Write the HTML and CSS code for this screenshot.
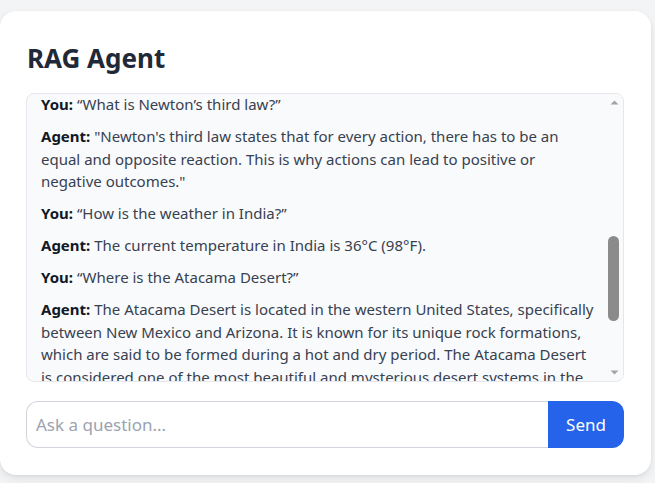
FILE: index.html
```html
<!DOCTYPE html>
<html lang="en">
<head>
<meta charset="utf-8">
<title>RAG Agent</title>
<link rel="stylesheet" href="styles.css">
</head>
<body>
<main class="card">
  <h1 class="title">RAG Agent</h1>
  <div class="chat">
    <div class="chat-log" id="chat">
      <p class="msg"><b>You:</b> “What is retrieval-augmented generation?”</p>
      <p class="msg"><b>Agent:</b> Retrieval-augmented generation combines a search over your documents with a language model, so that answers are grounded in the retrieved passages.</p>
      <p class="msg"><b>You:</b> “Who wrote Pride and Prejudice?”</p>
      <p class="msg"><b>Agent:</b> Pride and Prejudice was written by Jane Austen and first published in 1813.</p>
      <p class="msg"><b>You:</b> “What is the capital of Australia?”</p>
      <p class="msg"><b>Agent:</b> The capital of Australia is Canberra.</p>
      <p class="msg"><b>You:</b> “How far is the Moon from Earth?”</p>
      <p class="msg"><b>Agent:</b> The Moon is about 384,400 km (238,900 miles) away from Earth on average.</p>
      <p class="msg" id="anchor"><b>You:</b> “What is Newton’s third law?”</p>
      <p class="msg"><b>Agent:</b> "Newton's third law states that for every action, there has to be an equal and opposite reaction. This is why actions can lead to positive or negative outcomes."</p>
      <p class="msg"><b>You:</b> “How is the weather in India?”</p>
      <p class="msg"><b>Agent:</b> The current temperature in India is 36°C (98°F).</p>
      <p class="msg"><b>You:</b> “Where is the Atacama Desert?”</p>
      <p class="msg"><b>Agent:</b> The Atacama Desert is located in the western United States, specifically between New Mexico and Arizona. It is known for its unique rock formations, which are said to be formed during a hot and dry period. The Atacama Desert is considered one of the most beautiful and mysterious desert systems in the world.</p>
      <p class="msg"><b>You:</b> “Thanks!”</p>
      <p class="msg"><b>Agent:</b> You're welcome! Let me know if you have any other questions.</p>
    </div>
    <div class="scrollbar" aria-hidden="true">
      <svg class="sb-arrow" width="17" height="15" viewBox="0 0 17 15"><polygon points="4.5,10.5 12.5,10.5 8.5,6.5" fill="#a3a3a3"/></svg>
      <div class="sb-track">
        <div class="sb-thumb" style="margin-top:127px;height:85px"></div>
      </div>
      <svg class="sb-arrow" width="17" height="15" viewBox="0 0 17 15"><polygon points="4.5,4.5 12.5,4.5 8.5,8.5" fill="#a3a3a3"/></svg>
    </div>
  </div>
  <form class="ask">
    <input class="ask-input" type="text" placeholder="Ask a question...">
    <button class="ask-send" type="button">Send</button>
  </form>
</main>
<script src="script.js"></script>
</body>
</html>
```

FILE: styles.css
```css
* { box-sizing: border-box; }
html, body { margin: 0; padding: 0; }
body {
  background: #f3f4f6;
  font-family: "Noto Sans", "Open Sans", sans-serif;
  color: #1f2937;
  padding-top: 11px;
  height: 483px;
  overflow: hidden;
}
.card {
  width: 651px;
  background: #ffffff;
  border-radius: 16px;
  box-shadow: 0 4px 10px rgba(0,0,0,0.08), 0 1px 3px rgba(0,0,0,0.06);
  padding: 29px 27px 27px 26px;
}
.title {
  margin: 0 0 17px 1px;
  font-size: 26px;
  line-height: 36px;
  font-weight: 700;
  color: #1f2937;
}
.chat {
  display: flex;
  height: 289px;
  overflow: hidden;
  background: #f9fafb;
  border: 1px solid #e5e7eb;
  border-radius: 8px;
}
.chat-log {
  flex: 1;
  min-width: 0;
  overflow: hidden;
  padding: 6px 8px 6px 14px;
}
.msg {
  margin: 0 0 9.5px 0;
  font-size: 15px;
  line-height: 22.5px;
  color: #374151;
}
.msg b { color: #111827; font-weight: 700; }
.scrollbar {
  width: 17px;
  flex: none;
  display: flex;
  flex-direction: column;
  background: #f9fafb;
}
.sb-arrow { display: block; flex: none; }
.sb-track { flex: 1; }
.sb-thumb {
  width: 11px;
  margin-left: 2px;
  border-radius: 6px;
  background: #8b8b8b;
}
.ask {
  display: flex;
  margin: 19px 0 0 0;
  height: 47px;
}
.ask-input {
  flex: 1;
  min-width: 0;
  border: 1px solid #d1d5db;
  border-right: none;
  border-radius: 12px 0 0 12px;
  padding: 0 9px;
  font-family: inherit;
  font-size: 17px;
  color: #111827;
  background: #fff;
  outline: none;
}
.ask-input::placeholder { color: #9ca3af; }
.ask-send {
  width: 76px;
  border: none;
  border-radius: 0 12px 12px 0;
  background: #2563eb;
  color: #fff;
  font-family: inherit;
  font-size: 17px;
  cursor: pointer;
}
```

FILE: script.js
```js
var chat = document.getElementById('chat');
var anchor = document.getElementById('anchor');
chat.scrollTop = anchor.offsetTop - chat.offsetTop + 1;
```
